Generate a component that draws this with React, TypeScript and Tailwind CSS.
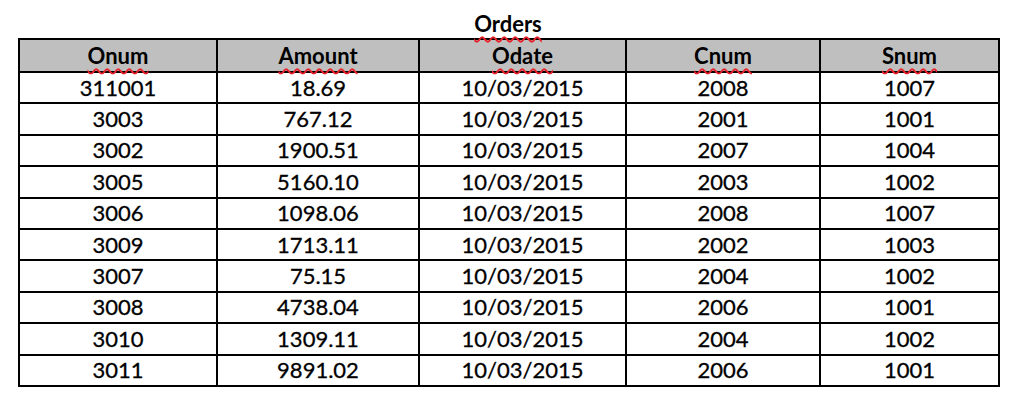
import React from 'react';

const ROWS = [
  ['311001', '18.69', '10/03/2015', '2008', '1007'],
  ['3003', '767.12', '10/03/2015', '2001', '1001'],
  ['3002', '1900.51', '10/03/2015', '2007', '1004'],
  ['3005', '5160.10', '10/03/2015', '2003', '1002'],
  ['3006', '1098.06', '10/03/2015', '2008', '1007'],
  ['3009', '1713.11', '10/03/2015', '2002', '1003'],
  ['3007', '75.15', '10/03/2015', '2004', '1002'],
  ['3008', '4738.04', '10/03/2015', '2006', '1001'],
  ['3010', '1309.11', '10/03/2015', '2004', '1002'],
  ['3011', '9891.02', '10/03/2015', '2006', '1001'],
];

const HEADERS = ['Onum', 'Amount', 'Odate', 'Cnum', 'Snum'];
const WIDTHS = ['w-[198px]', 'w-[202px]', 'w-[207px]', 'w-[194px]', 'w-[179px]'];

// wavy spell-check style underline
const squiggle = 'underline decoration-wavy decoration-[#e8202a] decoration-[1.5px] underline-offset-[4px]';

export default function App() {
  return (
    <div className="bg-white w-[1024px] h-[402px] pt-[9px] pl-[18px] text-black" style={{ fontFamily: 'Lato, "Open Sans", sans-serif' }}>
      <div className="w-[980px] text-center">
        <span className={`text-[22px] font-bold leading-[29px] ${squiggle}`}>Orders</span>
      </div>
      <table className="w-[980px] border-collapse table-fixed text-[22px] text-center">
        <thead>
          <tr className="bg-[#bfbfbf] h-[33px]">
            {HEADERS.map((h, i) => (
              <th key={h} className={`${WIDTHS[i]} border-2 border-black p-0 font-bold leading-none`}>
                <span className={squiggle}>{h}</span>
              </th>
            ))}
          </tr>
        </thead>
        <tbody>
          {ROWS.map((row, r) => (
            <tr key={r} className="h-[31.4px]">
              {row.map((cell, c) => (
                <td key={c} className="border-2 border-black p-0 leading-none [-webkit-text-stroke:0.3px_black]">
                  {cell}
                </td>
              ))}
            </tr>
          ))}
        </tbody>
      </table>
    </div>
  );
}
